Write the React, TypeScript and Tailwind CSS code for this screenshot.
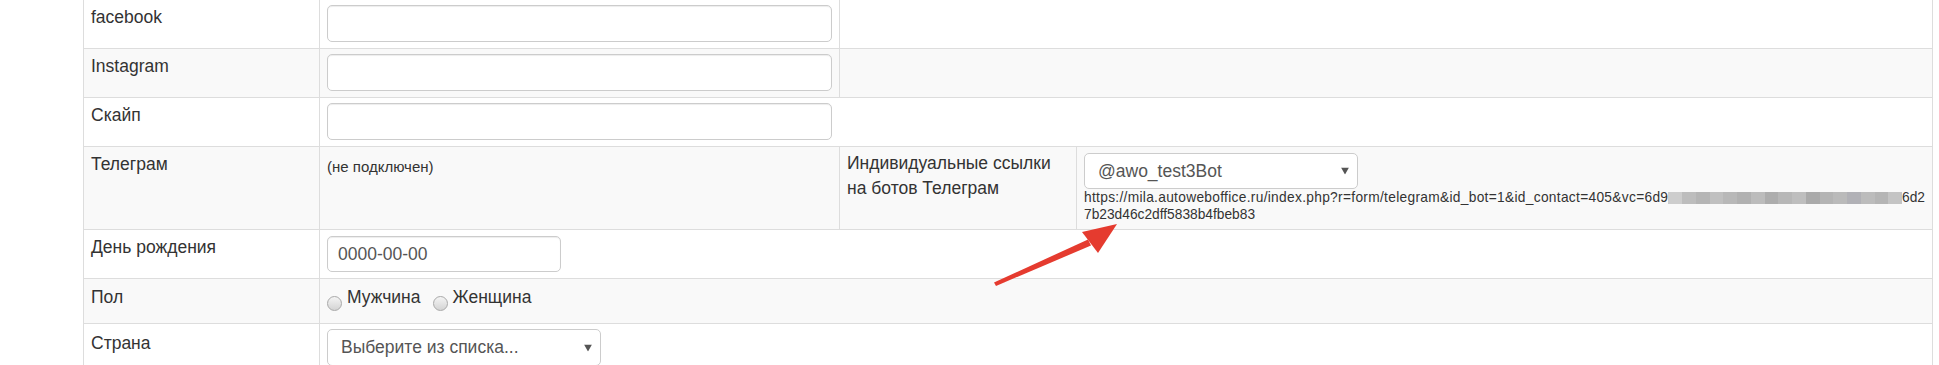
import React from "react";

// pixelated blur over the hidden part of the link
const blurBlocks = [
  "bg-[#cdcdcd]",
  "bg-[#bdbdbd]",
  "bg-[#b5b5b5]",
  "bg-[#c0c0c0]",
  "bg-[#b8b8b8]",
  "bg-[#b1b1b1]",
  "bg-[#bcbcbc]",
  "bg-[#adadad]",
  "bg-[#b7b7b7]",
  "bg-[#bebebe]",
  "bg-[#aaaaaa]",
  "bg-[#b4b4b4]",
  "bg-[#bababa]",
  "bg-[#b1b1b6]",
  "bg-[#bcbcbc]",
  "bg-[#b5b5b5]",
  "bg-[#c4c4c4]",
];

const cell = "border-l border-[#ddd] px-[7px]";
const label = "text-[17.5px] leading-[25px] text-[#333]";

const TextInput = ({ value = "", className = "" }: { value?: string; className?: string }) => (
  <input
    readOnly
    value={value}
    className={`block h-[37px] rounded-[5px] border border-[#ccc] bg-white px-[10px] text-[17.5px] text-[#555] shadow-[inset_0_1px_1px_rgba(0,0,0,0.075)] outline-none ${className}`}
  />
);

const FakeSelect = ({ text, className = "" }: { text: string; className?: string }) => (
  <div
    className={`relative flex items-center rounded-[5px] border border-[#ccc] bg-white pl-[13px] text-[17.5px] text-[#555] ${className}`}
  >
    <span>{text}</span>
    <svg
      className="absolute right-[8px] top-1/2 -translate-y-1/2"
      width="8"
      height="7"
      viewBox="0 0 8 7"
    >
      <polygon points="0,0 8,0 4,7" fill="#555" />
    </svg>
  </div>
);

const Radio = ({ text }: { text: string }) => (
  <div className="flex items-start">
    <div className="mt-[11px] h-[15px] w-[15px] rounded-full border border-[#a9a9a9] bg-linear-to-b from-[#f4f4f4] to-[#d4d4d4]" />
    <span className={`ml-[5px] ${label}`}>{text}</span>
  </div>
);

export default function App() {
  return (
    <div className="relative h-[365px] w-[1939px] overflow-hidden bg-white font-['Liberation_Sans',Arial,sans-serif]">
      <div className="-mt-px ml-[83px] w-[1850px] border-r border-[#ddd]">
        {/* facebook */}
        <div className="grid h-[49px] grid-cols-[236px_520px_1fr] border-t border-[#ddd] bg-white">
          <div className={`${cell} pt-[5px] ${label}`}>facebook</div>
          <div className={`${cell} pt-[5px]`}>
            <TextInput className="w-full" />
          </div>
          <div className={cell} />
        </div>

        {/* Instagram */}
        <div className="grid h-[49px] grid-cols-[236px_520px_1fr] border-t border-[#ddd] bg-[#f9f9f9]">
          <div className={`${cell} pt-[5px] ${label}`}>Instagram</div>
          <div className={`${cell} pt-[5px]`}>
            <TextInput className="w-full" />
          </div>
          <div className={cell} />
        </div>

        {/* Скайп */}
        <div className="grid h-[49px] grid-cols-[236px_1fr] border-t border-[#ddd] bg-white">
          <div className={`${cell} pt-[5px] ${label}`}>Скайп</div>
          <div className={`${cell} pt-[5px]`}>
            <TextInput className="w-[505px]" />
          </div>
        </div>

        {/* Телеграм */}
        <div className="grid h-[83px] grid-cols-[236px_520px_237px_1fr] border-t border-[#ddd] bg-[#f9f9f9]">
          <div className={`${cell} pt-[5px] ${label}`}>Телеграм</div>
          <div className={`${cell} pt-[9px] text-[15px] leading-[21px] text-[#333]`}>(не подключен)</div>
          <div className={`${cell} pt-[4px] ${label}`}>
            Индивидуальные ссылки
            <br />
            на ботов Телеграм
          </div>
          <div className={`${cell} pt-[6px]`}>
            <FakeSelect text="@awo_test3Bot" className="h-[36px] w-[274px]" />
            <div className="text-[13.75px] leading-[17px] text-[#333]">
              <div className="flex w-[841px] items-start">
                <span className="whitespace-nowrap tracking-[0.3px]">
                  https://mila.autoweboffice.ru/index.php?r=form/telegram&amp;id_bot=1&amp;id_contact=405&amp;vc=6d9
                </span>
                <div className="mt-[3px] flex h-[12px] flex-1">
                  {blurBlocks.map((c, i) => (
                    <div key={i} className={`h-full flex-1 ${c}`} />
                  ))}
                </div>
                <span>6d2</span>
              </div>
              <div>7b23d46c2dff5838b4fbeb83</div>
            </div>
          </div>
        </div>

        {/* День рождения */}
        <div className="grid h-[49px] grid-cols-[236px_1fr] border-t border-[#ddd] bg-white">
          <div className={`${cell} pt-[5px] ${label}`}>День рождения</div>
          <div className={`${cell} pt-[6px]`}>
            <TextInput value="0000-00-00" className="!h-[36px] w-[234px]" />
          </div>
        </div>

        {/* Пол */}
        <div className="grid h-[45px] grid-cols-[236px_1fr] border-t border-[#ddd] bg-[#f9f9f9]">
          <div className={`${cell} pt-[6px] ${label}`}>Пол</div>
          <div className={`${cell} flex gap-[12px] pt-[6px]`}>
            <Radio text="Мужчина" />
            <Radio text="Женщина" />
          </div>
        </div>

        {/* Страна */}
        <div className="grid h-[49px] grid-cols-[236px_1fr] border-t border-[#ddd] bg-white">
          <div className={`${cell} pt-[7px] ${label}`}>Страна</div>
          <div className={`${cell} pt-[5px]`}>
            <FakeSelect text="Выберите из списка..." className="h-[37px] w-[274px]" />
          </div>
        </div>
      </div>

      {/* red annotation arrow */}
      <svg className="pointer-events-none absolute left-0 top-0" width="1939" height="365" viewBox="0 0 1939 365">
        <polygon points="994,282.5 996,286 1091,245.5 1088,239.5" fill="#e53b2f" />
        <polygon points="1117,224 1082,232 1098,253" fill="#e53b2f" />
      </svg>
    </div>
  );
}
